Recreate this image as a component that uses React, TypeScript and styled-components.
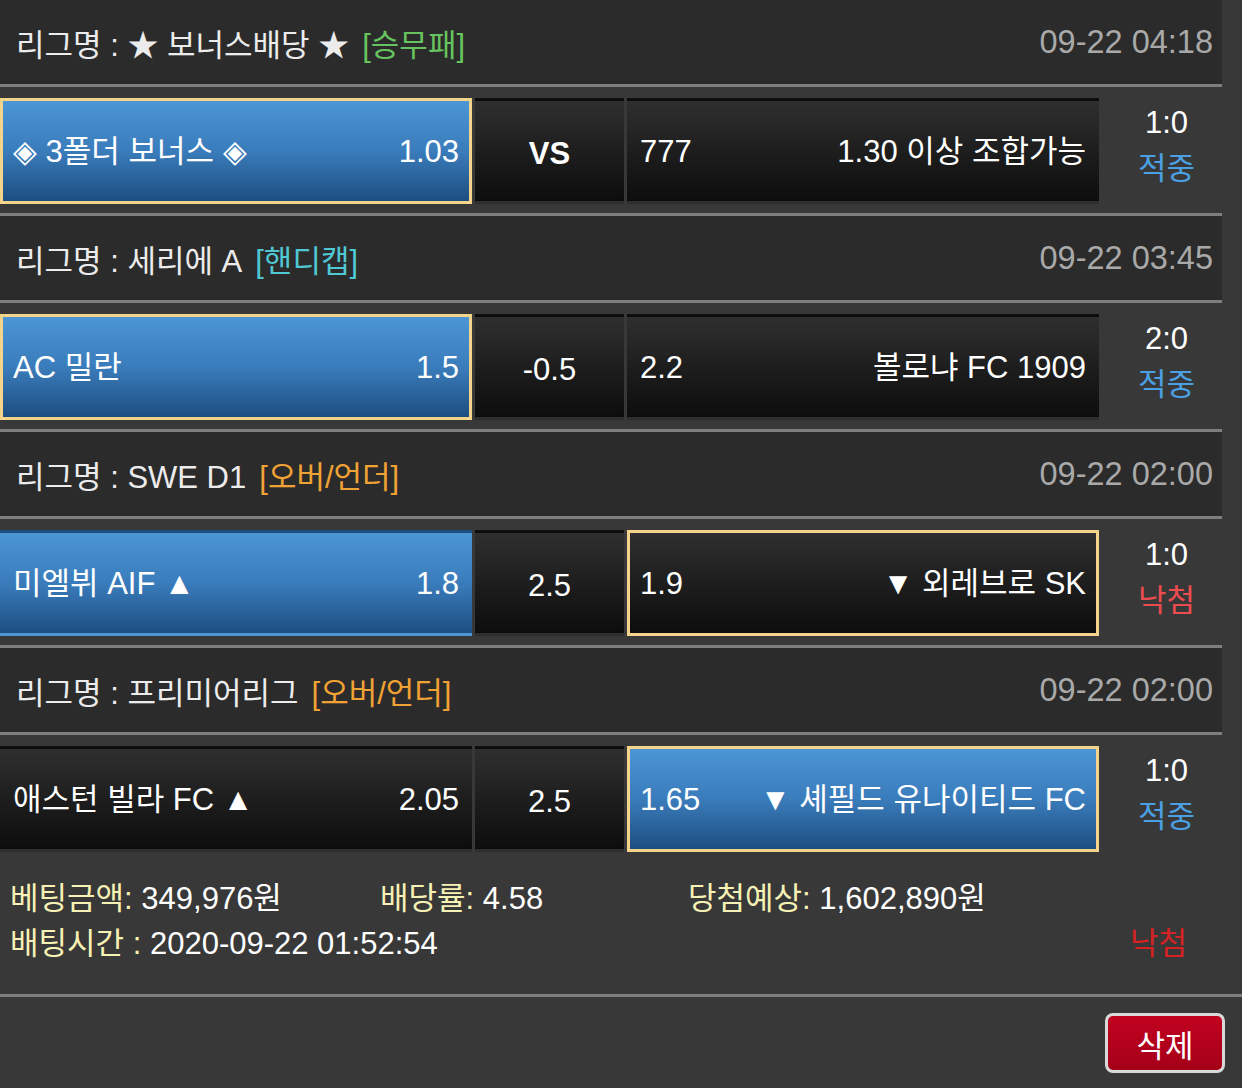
import React from "react";
import styled, { createGlobalStyle } from "styled-components";

const GlobalStyle = createGlobalStyle`
body {
  margin: 0;
  background: #383838;
  font-family: "Liberation Sans", "Noto Sans CJK KR", sans-serif;
}
`

type Pick = "home" | "away";

interface IMatch {
    league: string;
    kind: string;
    kindColor: string;
    date: string;
    home: string;
    homeOdds: string;
    center: string;
    bold?: boolean;
    awayOdds: string;
    away: string;
    pick: Pick;
    homeBlue: boolean;
    awayBlue: boolean;
    score: string;
    result: string;
    win: boolean;
}

const matches: IMatch[] = [
    {
        league: "리그명 : ★ 보너스배당 ★", kind: "[승무패]", kindColor: "#67c35f", date: "09-22 04:18",
        home: "◈ 3폴더 보너스 ◈", homeOdds: "1.03", center: "VS", bold: true, awayOdds: "777", away: "1.30 이상 조합가능",
        pick: "home", homeBlue: true, awayBlue: false, score: "1:0", result: "적중", win: true,
    },
    {
        league: "리그명 : 세리에 A", kind: "[핸디캡]", kindColor: "#4fc8d4", date: "09-22 03:45",
        home: "AC 밀란", homeOdds: "1.5", center: "-0.5", awayOdds: "2.2", away: "볼로냐 FC 1909",
        pick: "home", homeBlue: true, awayBlue: false, score: "2:0", result: "적중", win: true,
    },
    {
        league: "리그명 : SWE D1", kind: "[오버/언더]", kindColor: "#f1a234", date: "09-22 02:00",
        home: "미엘뷔 AIF ▲", homeOdds: "1.8", center: "2.5", awayOdds: "1.9", away: "▼ 외레브로 SK",
        pick: "away", homeBlue: true, awayBlue: false, score: "1:0", result: "낙첨", win: false,
    },
    {
        league: "리그명 : 프리미어리그", kind: "[오버/언더]", kindColor: "#f1a234", date: "09-22 02:00",
        home: "애스턴 빌라 FC ▲", homeOdds: "2.05", center: "2.5", awayOdds: "1.65", away: "▼ 셰필드 유나이티드 FC",
        pick: "away", homeBlue: false, awayBlue: true, score: "1:0", result: "적중", win: true,
    },
];

const Page = styled.div`
width: 1242px;
color: #fff;
font-size: 31px;
`

const LeagueBar = styled.div`
width: 1222px;
height: 87px;
box-sizing: border-box;
padding: 0 9px 0 16px;
background: #2b2b2b;
border-bottom: 3px solid #7e7e7e;
display: flex;
align-items: center;
justify-content: space-between;
color: #ececec;
`

const LeagueName = styled.div`
display: flex;
align-items: center;
gap: 13px;
`

const Kind = styled.span<{ $color: string }>`
color: ${p => p.$color};
`

const MatchDate = styled.span`
color: #a9a9a9;
font-size: 32.5px;
`

const MatchRow = styled.div<{ $last?: boolean }>`
width: 1222px;
padding: 11px 0 9px;
display: grid;
grid-template-columns: 472px 149px 472px 123px;
column-gap: 3px;
border-bottom: ${p => (p.$last ? "none" : "3px solid #7e7e7e")};
`

const Cell = styled.div<{ $blue?: boolean; $picked?: boolean }>`
height: 106px;
box-sizing: border-box;
padding: 0 10px;
display: flex;
align-items: center;
justify-content: space-between;
line-height: 1;
background: ${p => p.$blue
        ? "linear-gradient(to bottom, #4c96d6 0%, #3a7cbb 50%, #1d4e80 100%)"
        : "linear-gradient(to bottom, #2f2f2f 0%, #1c1c1c 55%, #0d0d0d 100%)"};
border: 3px solid ${p => (p.$picked ? "#f4d48b" : "transparent")};
white-space: nowrap;
`

const CenterCell = styled(Cell) <{ $bold?: boolean }>`
justify-content: center;
font-weight: ${p => (p.$bold ? 700 : 400)};
padding-top: 4px;
`

const ScoreBox = styled.div`
display: flex;
flex-direction: column;
align-items: center;
justify-content: center;
line-height: 46px;
padding: 0 0 10px 6px;
`

const Result = styled.span<{ $win: boolean }>`
color: ${p => (p.$win ? "#4aa0e2" : "#ea4c4f")};
`

const Summary = styled.div`
padding: 12px 55px 31px 10px;
border-bottom: 3px solid #7e7e7e;
`

const SummaryLine = styled.div`
display: grid;
grid-template-columns: 370px 308px 1fr;
height: 45px;
align-items: center;
`

const SummaryBottom = styled.div`
display: flex;
justify-content: space-between;
height: 45px;
align-items: center;
`

const Label = styled.span`
color: #f6f1b4;
`

const Lost = styled.span`
color: #d62222;
`

const Actions = styled.div`
display: flex;
justify-content: flex-end;
padding: 16px 17px 16px 0;
`

const DeleteButton = styled.button`
width: 120px;
height: 60px;
border: 3px solid #d9d9d9;
border-radius: 8px;
background: linear-gradient(to bottom, #c1021f, #a50019);
color: #fff;
font-family: inherit;
font-size: 31px;
padding: 0;
`

const App: React.FC = () => {
    return (
        <Page>
            <GlobalStyle />
            {matches.map((m, i) => (
                <React.Fragment key={i}>
                    <LeagueBar>
                        <LeagueName>
                            <span>{m.league}</span>
                            <Kind $color={m.kindColor}>{m.kind}</Kind>
                        </LeagueName>
                        <MatchDate>{m.date}</MatchDate>
                    </LeagueBar>
                    <MatchRow $last={i === matches.length - 1}>
                        <Cell $blue={m.homeBlue} $picked={m.pick === "home" && m.homeBlue}>
                            <span>{m.home}</span>
                            <span>{m.homeOdds}</span>
                        </Cell>
                        <CenterCell $bold={m.bold}>{m.center}</CenterCell>
                        <Cell $blue={m.awayBlue} $picked={m.pick === "away"}>
                            <span>{m.awayOdds}</span>
                            <span>{m.away}</span>
                        </Cell>
                        <ScoreBox>
                            <span>{m.score}</span>
                            <Result $win={m.win}>{m.result}</Result>
                        </ScoreBox>
                    </MatchRow>
                </React.Fragment>
            ))}
            <Summary>
                <SummaryLine>
                    <span><Label>베팅금액:</Label> 349,976원</span>
                    <span><Label>배당률:</Label> 4.58</span>
                    <span><Label>당첨예상:</Label> 1,602,890원</span>
                </SummaryLine>
                <SummaryBottom>
                    <span><Label>배팅시간 :</Label> 2020-09-22 01:52:54</span>
                    <Lost>낙첨</Lost>
                </SummaryBottom>
            </Summary>
            <Actions>
                <DeleteButton>삭제</DeleteButton>
            </Actions>
        </Page>
    )
}

export default App;
